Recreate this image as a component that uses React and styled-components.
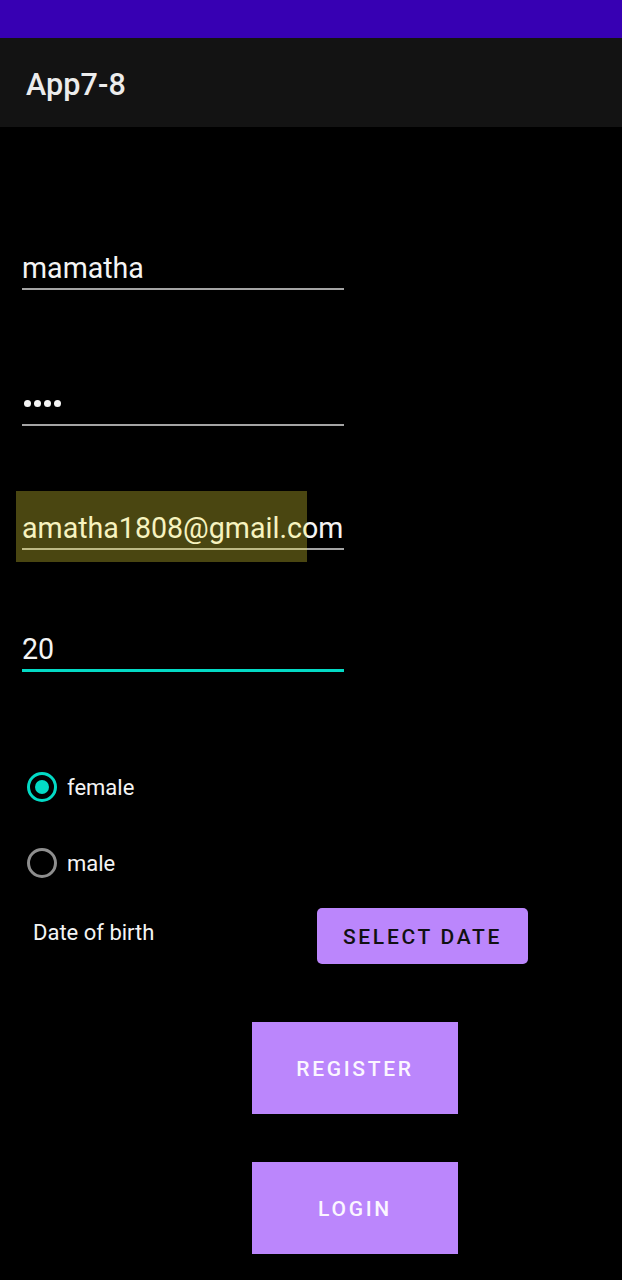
import React from "react";
import styled, { createGlobalStyle } from "styled-components";

const Global = createGlobalStyle`
  html, body { margin: 0; padding: 0; background: #000; }
  body { font-family: Roboto, "Liberation Sans", sans-serif; color: #fff; }
  * { box-sizing: border-box; }
`;

const Screen = styled.div`
  width: 622px;
  min-height: 1280px;
  background: #000;
  display: flex;
  flex-direction: column;
`;

const StatusBar = styled.div`
  height: 38px;
  background: #3700b3;
`;

const Toolbar = styled.header`
  height: 89px;
  background: #131313;
  display: flex;
  align-items: center;
  padding-left: 26px;
  padding-top: 3px;
`;

const Title = styled.h1`
  margin: 0;
  font-size: 30.5px;
  font-weight: 500;
  color: #ececec;
  letter-spacing: 0.1px;
`;

const Form = styled.main`
  display: flex;
  flex-direction: column;
  padding-left: 22px;
`;

const FieldWrap = styled.div`
  position: relative;
  width: 322px;
  margin-top: ${(p) => p.$top}px;
`;

const Field = styled.div`
  width: 322px;
  height: ${(p) => (p.$focused ? 41 : 40)}px;
  padding-bottom: 3px;
  display: flex;
  align-items: flex-end;
  font-size: 28.6px;
  line-height: 34px;
  color: #f4f4f4;
  white-space: nowrap;
  overflow: hidden;
  border-bottom: ${(p) => (p.$focused ? "3px solid #03dac5" : "2px solid #a4a4a4")};
`;

const Dots = styled.div`
  height: 36px;
  display: flex;
  align-items: center;
  gap: 3px;
  padding-left: 1.5px;
`;

const Dot = styled.span`
  width: 7px;
  height: 7px;
  border-radius: 50%;
  background: #f4f4f4;
`;

const Highlight = styled.div`
  position: absolute;
  left: -6px;
  top: -19px;
  width: 291px;
  height: 71px;
  background: rgba(255, 240, 60, 0.29);
  pointer-events: none;
`;

const RadioRow = styled.label`
  display: flex;
  align-items: center;
  height: 30px;
  margin-top: ${(p) => p.$top}px;
  padding-left: 5px;
  gap: 10px;
  font-size: 22px;
  color: #f4f4f4;
`;

const RadioCircle = styled.span`
  width: 30px;
  height: 30px;
  border-radius: 50%;
  border: 3px solid ${(p) => (p.$checked ? "#03dac5" : "#8e8e8e")};
  display: flex;
  align-items: center;
  justify-content: center;
  &::after {
    content: "";
    display: ${(p) => (p.$checked ? "block" : "none")};
    width: 14px;
    height: 14px;
    border-radius: 50%;
    background: #03dac5;
  }
`;

const DateRow = styled.div`
  display: flex;
  align-items: flex-start;
  margin-top: 30px;
  padding-left: 11px;
`;

const DateLabel = styled.span`
  width: 284px;
  margin-top: 12px;
  font-size: 22px;
  line-height: 26px;
  color: #f4f4f4;
`;

const PurpleButton = styled.button`
  border: none;
  background: #bb86fc;
  font-family: Roboto, "Liberation Sans", sans-serif;
  font-weight: 500;
  font-size: 21px;
  letter-spacing: 2.7px;
  text-transform: uppercase;
  padding: 0;
  display: flex;
  align-items: center;
  justify-content: center;
`;

const SelectDate = styled(PurpleButton)`
  width: 211px;
  height: 56px;
  border-radius: 5px;
  color: #111;
  padding-top: 2px;
`;

const BigButton = styled(PurpleButton)`
  width: 206px;
  height: 92px;
  margin-top: ${(p) => p.$top}px;
  margin-left: 230px;
  color: #fbf6ff;
  padding-top: 2px;
`;

export default function App() {
  return (
    <>
      <Global />
      <Screen>
        <StatusBar />
        <Toolbar>
          <Title>App7-8</Title>
        </Toolbar>
        <Form>
          <FieldWrap $top={123}>
            <Field>mamatha</Field>
          </FieldWrap>
          <FieldWrap $top={96}>
            <Field>
              <Dots>
                <Dot />
                <Dot />
                <Dot />
                <Dot />
              </Dots>
            </Field>
          </FieldWrap>
          <FieldWrap $top={84}>
            <Field>amatha1808@gmail.com</Field>
            <Highlight />
          </FieldWrap>
          <FieldWrap $top={81}>
            <Field $focused>20</Field>
          </FieldWrap>

          <RadioRow $top={100}>
            <RadioCircle $checked />
            female
          </RadioRow>
          <RadioRow $top={46}>
            <RadioCircle />
            male
          </RadioRow>

          <DateRow>
            <DateLabel>Date of birth</DateLabel>
            <SelectDate>Select date</SelectDate>
          </DateRow>

          <BigButton $top={58}>Register</BigButton>
          <BigButton $top={48}>Login</BigButton>
        </Form>
      </Screen>
    </>
  );
}
